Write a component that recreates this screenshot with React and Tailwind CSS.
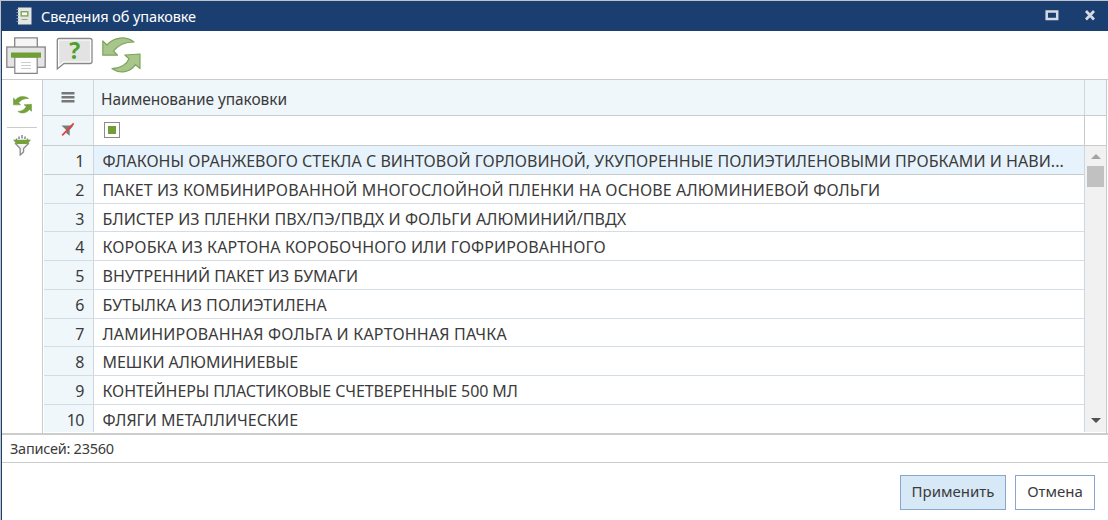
import React from "react";

const rows = [
  ["ФЛАКОНЫ ОРАНЖЕВОГО СТЕКЛА С ВИНТОВОЙ ГОРЛОВИНОЙ, УКУПОРЕННЫЕ ПОЛИЭТИЛЕНОВЫМИ ПРОБКАМИ И НАВИ...", "tracking-[0.04px]"],
  ["ПАКЕТ ИЗ КОМБИНИРОВАННОЙ МНОГОСЛОЙНОЙ ПЛЕНКИ НА ОСНОВЕ АЛЮМИНИЕВОЙ ФОЛЬГИ", "tracking-[0.12px]"],
  ["БЛИСТЕР ИЗ ПЛЕНКИ ПВХ/ПЭ/ПВДХ И ФОЛЬГИ АЛЮМИНИЙ/ПВДХ", "tracking-[0.09px]"],
  ["КОРОБКА ИЗ КАРТОНА КОРОБОЧНОГО ИЛИ ГОФРИРОВАННОГО", "tracking-[0.11px]"],
  ["ВНУТРЕННИЙ ПАКЕТ ИЗ БУМАГИ", "tracking-[-0.01px]"],
  ["БУТЫЛКА ИЗ ПОЛИЭТИЛЕНА", "tracking-[0.04px]"],
  ["ЛАМИНИРОВАННАЯ ФОЛЬГА И КАРТОННАЯ ПАЧКА", "tracking-[0.18px]"],
  ["МЕШКИ АЛЮМИНИЕВЫЕ", "tracking-[-0.02px]"],
  ["КОНТЕЙНЕРЫ ПЛАСТИКОВЫЕ СЧЕТВЕРЕННЫЕ 500 МЛ", "tracking-[-0.09px]"],
  ["ФЛЯГИ МЕТАЛЛИЧЕСКИЕ", "tracking-[0.02px]"],
];

function BookIcon() {
  return (
    <svg width="18" height="18" viewBox="0 0 18 18" className="block">
      <rect x="3" y="0.5" width="13.5" height="17" fill="#e3e6e3" />
      <path d="M1.5 2.5h2M1.5 5.5h2M1.5 8.5h2M1.5 11.5h2M1.5 14.5h2" stroke="#8b9497" strokeWidth="1" />
      <rect x="6.2" y="4.7" width="6.6" height="4.2" fill="#f6faf2" stroke="#7fa55f" strokeWidth="1.4" />
      <path d="M6.5 12.5h6" stroke="#8faa78" strokeWidth="1" />
    </svg>
  );
}

function PrinterIcon() {
  return (
    <svg width="40" height="38" viewBox="0 0 40 38" className="block">
      <path d="M8.7 10V.9h22.6V10" fill="#f5f5f5" stroke="#858585" strokeWidth="1.3" />
      <rect x=".8" y="10" width="38.4" height="20.3" fill="#e4e4e4" stroke="#858585" strokeWidth="1.3" />
      <path d="M8.8 20h22.4v16.4H8.8z" fill="#fff" stroke="#858585" strokeWidth="1.2" />
      <rect x="5" y="15.5" width="30" height="5.2" fill="#6f9f35" />
      <path d="M15 25.5h10M15 28.5h10M15 31.5h10" stroke="#ccc" strokeWidth="1" />
    </svg>
  );
}

function HelpIcon() {
  return (
    <svg width="38" height="34" viewBox="0 0 38 34" className="block overflow-visible">
      <path d="M3 1.5h31q2 0 2 2v21q0 2-2 2H8L1.3 32V3.500q0-2 1.700-2z" fill="#fff" stroke="#878787" strokeWidth="1.3" />
      <path d="M3.200 3.400h30.900v21.200H7.500l-4.300 3.500z" fill="#e3e3e3" />
      <text x="18.8" y="22" textAnchor="middle" fill="#4fa02c" fontFamily="Open Sans, sans-serif" fontSize="23" fontWeight="700">?</text>
    </svg>
  );
}

function SyncIcon({ w, h, fill, stroke }) {
  return (
    <svg width={w} height={h} viewBox="0 0 39 37" className="block">
      <g fill={fill} stroke={stroke} strokeWidth="1.2" strokeLinejoin="round">
        <path d="M.8 4v14.200h14.700L11.500 14C16 8 22 5 32 5C24-1 12-.5 5 8z" />
        <path d="M38 17l-15.200 1L27 21.700C25 27 19 31.500 10 31.700C18 37 28 35.700 33.500 27.700L38 31.500z" />
      </g>
    </svg>
  );
}

function FilterIcon() {
  return (
    <svg width="18" height="21" viewBox="0 0 18 21" className="block">
      <path d="M3.500 5V3.500M6 4V1.500M9 3.500V0M12 4V1.500M14.500 5V3.500" stroke="#888" strokeWidth="1.500" />
      <path d="M2 8l5.200 5.500v6.500l3.400-3V13.500L16 8" fill="#f4f4f4" stroke="#8b8b8b" strokeWidth="1.300" />
      <path d="M0 4.800h18L14.500 9h-11z" fill="#75a13d" />
    </svg>
  );
}

function ClearFilterIcon() {
  return (
    <svg width="14" height="15" viewBox="0 0 14 15" className="block">
      <path d="M0.500 3.500h12L8.700 8v5.800L5.200 11V8z" fill="#7b7b7b" />
      <path d="M1.200 13.300L12.700 1.300" stroke="#e64038" strokeWidth="1.700" />
    </svg>
  );
}

export default function App() {
  return (
    <div className="flex h-[520px] w-[1108px] flex-col border-l border-t border-[#bfc2c8] bg-white font-['Noto_Sans','Open_Sans',sans-serif] text-[#3b3b3b]">
      <div className="flex h-[519px] flex-col border-l border-[#1b3e70]">
        <header className="flex h-[30px] shrink-0 items-center bg-[#1b3e70] pl-[13px] pr-[11px] text-white">
          <BookIcon />
          <h1 className="ml-[8px] whitespace-nowrap text-[14.5px] font-normal leading-[20px] tracking-[-0.1px]">Сведения об упаковке</h1>
          <svg width="52" height="14" viewBox="0 0 52 14" className="ml-auto block">
            <rect x="1.7" y="2.500" width="10.500" height="7.500" fill="none" stroke="#d5dae3" strokeWidth="2.500" />
            <path d="M41 2l8 8.500M49 2L41 10.500" stroke="#d5dae3" strokeWidth="2.700" />
          </svg>
        </header>

        <div className="flex h-[49px] shrink-0 items-start border-b border-[#c9cccd] pl-[4px] pt-[6px]">
          <PrinterIcon />
          <div className="ml-[10px]"><HelpIcon /></div>
          <div className="ml-[8px]"><SyncIcon w={39} h={37} fill="#a8c68a" stroke="#7ea45f" /></div>
        </div>

        <div className="flex h-[355px] shrink-0 border-b-2 border-[#cbcccc]">
          <aside className="flex w-[40px] shrink-0 flex-col items-center pt-[16px]">
            <SyncIcon w={19} h={18} fill="#75a13d" stroke="#75a13d" />
            <div className="mt-[13px] h-px w-[30px] bg-[#c9cccd]" />
            <div className="mt-[7px]"><FilterIcon /></div>
          </aside>

          <main className="flex w-[1065px] flex-col border-l border-r border-[#c9cccd]">
            <div className="flex h-[36px] shrink-0 border-b border-[#c9cccd] bg-[#eff7fb]">
              <div className="flex w-[51px] justify-center border-r border-[#ced7e0] pt-[12px]">
                <svg width="14" height="11" viewBox="0 0 14 11" className="block">
                  <path d="M.5 1.300h13M.5 5.300h13M.5 9.300h13" stroke="#777" strokeWidth="2.500" />
                </svg>
              </div>
              <div className="flex flex-1 items-center border-r border-[#ced7e0] pl-[7px] pt-[4px] text-[15.5px]">
                <span className="whitespace-nowrap tracking-[-0.08px]">Наименование упаковки</span>
              </div>
              <div className="w-[21px]" />
            </div>
            <div className="flex h-[30px] shrink-0 border-b border-[#c9cccd]">
              <div className="flex w-[51px] justify-center border-r border-[#ced7e0] bg-[#eff7fb] pt-[6px]"><ClearFilterIcon /></div>
              <div className="flex flex-1 border-r border-[#c9cccd] pl-[10px] pt-[6px]">
                <div className="flex h-[16px] w-[16px] items-center justify-center border border-[#8c8c8c] bg-white">
                  <div className="h-[8px] w-[8px] bg-[#6f9f35]" />
                </div>
              </div>
              <div className="w-[21px]" />
            </div>

            <div className="flex h-[286px]">
              <div className="flex w-[1041px] flex-col overflow-hidden pl-px">
                {rows.map(([name, tracking], i) => (
                  <div key={name} className={`flex h-[28.75px] shrink-0 border-b text-[16px] leading-[30px] ${i === 0 ? "border-[#c9cccd] bg-[#e7f3fc]" : i === 9 ? "border-transparent" : "border-[#d4dde6]"}`}>
                    <div className="w-[50px] shrink-0 border-r border-[#ced7e0] bg-[#eff7fb] pr-[9px] text-right tracking-[-0.5px]"><span className="block h-[27px]">{i + 1}</span></div>
                    <div className={`h-[27px] whitespace-nowrap pl-[8.5px] ${tracking}`}>{name}</div>
                  </div>
                ))}
              </div>
              <div className="flex w-[22px] flex-col items-center border-l border-[#ced7e0] bg-[#f1f1f1]">
                <svg width="10" height="5" viewBox="0 0 10 5" className="mt-[8px] block"><path d="M0 5L5 0l5 5z" fill="#a3a3a3" /></svg>
                <div className="mt-[7px] h-[21px] w-[17px] bg-[#c1c1c1]" />
                <svg width="10" height="5" viewBox="0 0 10 5" className="mb-[9px] mt-auto block"><path d="M0 0h10L5 5z" fill="#505050" /></svg>
              </div>
            </div>
          </main>
        </div>

        <div className="flex h-[28px] shrink-0 items-center border-b border-[#c9cccd] pl-[8px] text-[14.5px]">
          <span className="whitespace-nowrap tracking-[-0.25px]">Записей: 23560</span>
        </div>

        <footer className="flex justify-end gap-[9px] pr-[13px] pt-[12px] text-[15px]">
          <button className="h-[35px] w-[106px] whitespace-nowrap border border-[#89a6cc] bg-[#d7e9f7] pb-[2px]">Применить</button>
          <button className="h-[35px] w-[80px] whitespace-nowrap border border-[#89a6cc] bg-white pb-[2px]">Отмена</button>
        </footer>
      </div>
    </div>
  );
}
